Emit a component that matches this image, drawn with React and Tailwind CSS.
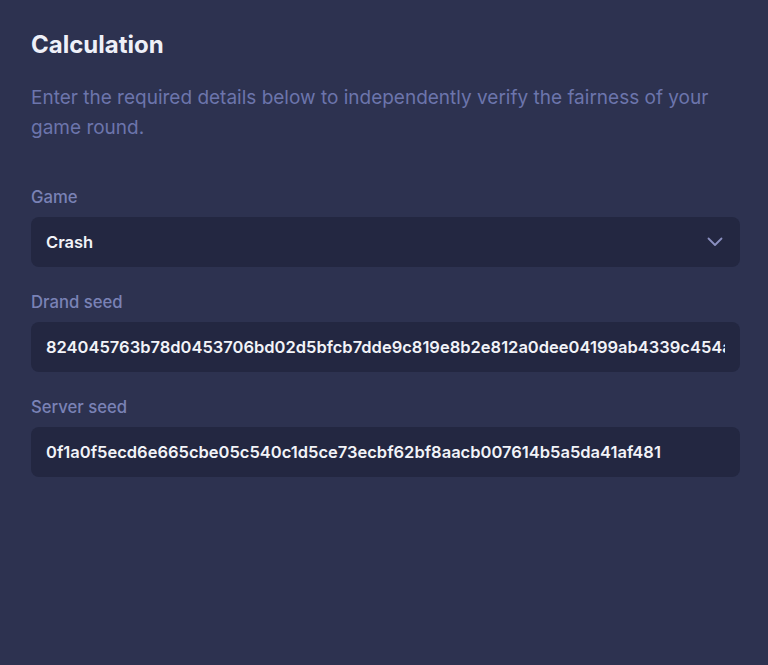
import React, { useState } from 'react';

const GAMES = ['Crash', 'Dice', 'Limbo', 'Plinko'];

const Field = ({ label, children }) => (
  <div className="flex flex-col gap-[9px]">
    <label className="text-[16.7px] leading-[22px] font-medium text-[#7a82b6]">{label}</label>
    {children}
  </div>
);

const Calculation = () => {
  const [game, setGame] = useState('Crash');
  const [drandSeed, setDrandSeed] = useState(
    '824045763b78d0453706bd02d5bfcb7dde9c819e8b2e812a0dee04199ab4339c454a8e1f07b2c6d3'
  );
  const [serverSeed, setServerSeed] = useState(
    '0f1a0f5ecd6e665cbe05c540c1d5ce73ecbf62bf8aacb007614b5a5da41af481'
  );

  return (
    <div className="min-h-[665px] bg-[#2d3250] pl-[31px] pr-[28px] pt-[29px] font-['Inter',sans-serif]">
      {/* Header */}
      <h1 className="text-[24px] leading-[32px] font-bold text-[#eef0f8]">Calculation</h1>
      <p className="mt-[22px] text-[19px] leading-[30px] text-[#6c75ac] max-w-[700px]">
        Enter the required details below to independently verify the fairness of your game round.
      </p>

      {/* Form */}
      <div className="mt-[43px] flex flex-col gap-[24px]">
        <Field label="Game">
          <div className="relative">
            <select
              value={game}
              onChange={(e) => setGame(e.target.value)}
              className="w-full h-[50px] appearance-none rounded-lg bg-[#232741] pl-[15px] pr-10 text-[16.5px] font-semibold text-[#f2f3f8] outline-none"
            >
              {GAMES.map((g) => (
                <option key={g} value={g}>{g}</option>
              ))}
            </select>
            <svg
              className="pointer-events-none absolute right-[17px] top-1/2 -translate-y-1/2"
              width="16"
              height="10"
              viewBox="0 0 16 10"
              fill="none"
            >
              <path d="M1.5 1.5 8 8l6.5-6.5" stroke="#8a8fc0" strokeWidth="1.8" strokeLinecap="round" strokeLinejoin="round" />
            </svg>
          </div>
        </Field>

        <Field label="Drand seed">
          <input
            value={drandSeed}
            onChange={(e) => setDrandSeed(e.target.value)}
            className="w-full h-[50px] rounded-lg bg-[#232741] px-[15px] text-[16.5px] font-semibold text-[#f2f3f8] outline-none"
          />
        </Field>

        <Field label="Server seed">
          <input
            value={serverSeed}
            onChange={(e) => setServerSeed(e.target.value)}
            className="w-full h-[50px] rounded-lg bg-[#232741] px-[15px] text-[16.5px] font-semibold text-[#f2f3f8] outline-none"
          />
        </Field>
      </div>
    </div>
  );
};

export default function App() {
  return <Calculation />;
}
